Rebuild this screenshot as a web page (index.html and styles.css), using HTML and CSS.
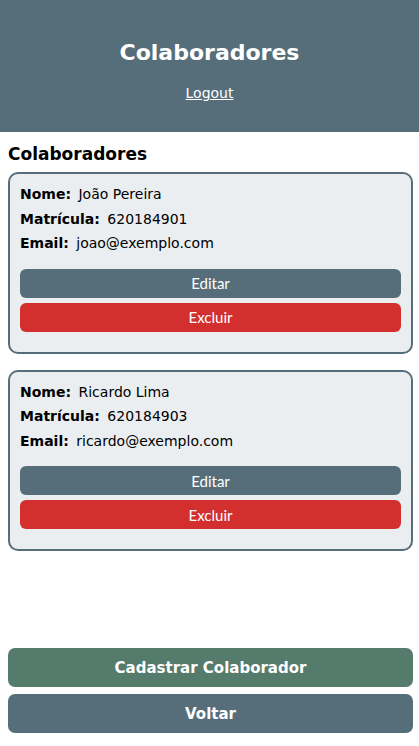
FILE: index.html
```html
<!DOCTYPE html>
<html lang="pt-BR">
<head>
<meta charset="utf-8">
<title>Colaboradores</title>
<link rel="stylesheet" href="styles.css">
</head>
<body>
<header class="topbar">
  <h1 class="topbar-title">Colaboradores</h1>
  <a class="topbar-link" href="#">Logout</a>
</header>
<main class="content">
  <h2 class="section-title">Colaboradores</h2>
  <div class="card">
    <p class="field"><strong>Nome:</strong> João Pereira</p>
    <p class="field"><strong>Matrícula:</strong> 620184901</p>
    <p class="field"><strong>Email:</strong> joao@exemplo.com</p>
    <div class="actions">
      <button class="btn btn-edit">Editar</button>
      <button class="btn btn-delete">Excluir</button>
    </div>
  </div>
  <div class="card">
    <p class="field"><strong>Nome:</strong> Ricardo Lima</p>
    <p class="field"><strong>Matrícula:</strong> 620184903</p>
    <p class="field"><strong>Email:</strong> ricardo@exemplo.com</p>
    <div class="actions">
      <button class="btn btn-edit">Editar</button>
      <button class="btn btn-delete">Excluir</button>
    </div>
  </div>
</main>
<footer class="bottom">
  <button class="big-btn big-green">Cadastrar Colaborador</button>
  <button class="big-btn big-slate">Voltar</button>
</footer>
</body>
</html>
```
FILE: styles.css
```css
html, body {
  margin: 0;
  padding: 0;
  height: 100%;
}
body {
  font-family: "DejaVu Sans", "Open Sans", sans-serif;
  color: #000;
  background: #fff;
  display: flex;
  flex-direction: column;
}
.topbar {
  background: #566e7a;
  height: 132px;
  box-sizing: border-box;
  display: flex;
  flex-direction: column;
  align-items: center;
  padding-top: 39px;
}
.topbar-title {
  margin: 0;
  color: #fff;
  font-size: 22px;
  font-weight: bold;
  line-height: 28px;
}
.topbar-link {
  margin-top: 17px;
  color: #fff;
  font-size: 14px;
  line-height: 18px;
  text-decoration: underline;
}
.content {
  padding: 0 6px 0 8px;
  flex: 1;
}
.section-title {
  margin: 12px 0 8px;
  font-size: 17px;
  line-height: 20px;
  font-weight: bold;
}
.card {
  background: #eaeef1;
  border: 2px solid #566e7a;
  border-radius: 10px;
  padding: 8px 10px 20px;
  margin-bottom: 16px;
}
.field {
  margin: 0;
  font-size: 14px;
  line-height: 24.5px;
}
.field strong {
  margin-right: 3px;
}
.actions {
  margin-top: 13px;
  display: flex;
  flex-direction: column;
  gap: 5px;
}
.btn {
  border: none;
  border-radius: 6px;
  height: 29px;
  color: #fff;
  font-family: "Lato", "Open Sans", sans-serif;
  font-size: 15px;
  padding: 0;
}
.btn-edit { background: #566e7a; }
.btn-delete { background: #d32f2f; }
.bottom {
  padding: 0 6px 13px 8px;
  display: flex;
  flex-direction: column;
  gap: 7px;
}
.big-btn {
  border: none;
  border-radius: 7px;
  height: 39px;
  color: #fff;
  font-family: "DejaVu Sans", sans-serif;
  font-weight: bold;
  font-size: 15px;
}
.big-green { background: #547b6b; }
.big-slate { background: #566e7a; }
```
